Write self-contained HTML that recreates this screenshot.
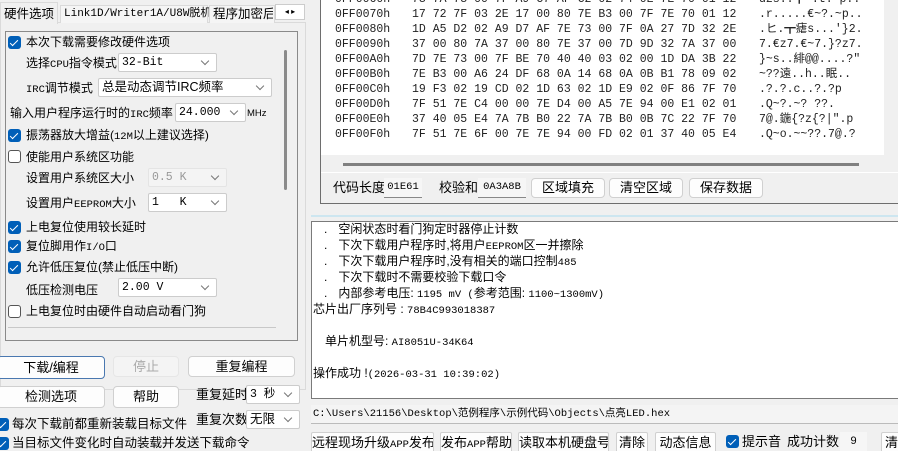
<!DOCTYPE html><html><head><meta charset="utf-8"><style>
*{margin:0;padding:0;box-sizing:border-box}
html,body{width:898px;height:451px;overflow:hidden}
body{background:#f0f0f0;position:relative;font-family:"Liberation Sans","Noto Sans CJK SC",sans-serif;font-size:12px;color:#000}
.a{position:absolute;white-space:nowrap}
.t{line-height:16px;font-size:12px}
.cb{position:absolute;width:13px;height:13px;border-radius:3px;background:#005fb8}
.cb:after{content:"";position:absolute;left:4px;top:1.5px;width:3px;height:7px;border:solid #fff;border-width:0 1.5px 1.5px 0;transform:rotate(45deg)}
.cbo{position:absolute;width:13px;height:13px;border-radius:3px;border:1px solid #555;background:#fff}
.sel{position:absolute;background:#fff;border:1px solid #ccc;border-radius:2px;font-family:"Liberation Mono","Noto Sans CJK SC",monospace;font-size:11.5px;padding-left:3px;line-height:17px;white-space:nowrap}
.sel:after{content:"";position:absolute;right:8px;top:4px;width:5px;height:5px;border:solid #777;border-width:0 1px 1px 0;transform:rotate(45deg)}
.btn{position:absolute;background:#fdfdfd;border:1px solid #d0d0d0;border-radius:4px;text-align:center;font-size:12px;white-space:nowrap;overflow:hidden}
.hx{font-family:"Liberation Mono",monospace;font-size:11.5px;color:#222;line-height:15px}
.box{position:absolute;background:#f6f6f6;border-bottom:1px solid #888;font-family:"Liberation Mono",monospace;font-size:10.5px;text-align:center;line-height:18px}
.m{font-family:"Liberation Mono",monospace;font-size:10.5px}
</style></head><body>
<div class="a" style="left:0;top:22px;width:306px;height:368px;border:1px solid #dadada;background:#f0f0f0"></div>
<div class="a" style="left:0;top:2px;width:58px;height:22px;background:#f0f0f0;border:1px solid #dadada;border-bottom:none;"></div>
<div class="a t" style="left:4px;top:6px;font-size:12.5px">硬件选项</div>
<div class="a" style="left:60px;top:5px;width:148px;height:18px;border:1px solid #dadada;border-bottom:none;background:#f5f5f5"></div>
<div class="a t" style="left:64px;top:6px;font-family:'Liberation Mono','Noto Sans CJK SC',monospace;font-size:11px">Link1D/Writer1A/U8W脱机</div>
<div class="a" style="left:209px;top:5px;width:66px;height:18px;border:1px solid #dadada;border-bottom:none;background:#f5f5f5"></div>
<div class="a t" style="left:213px;top:6px;font-size:12.5px;width:60px;overflow:hidden">程序加密后</div>
<div class="a" style="left:275px;top:4px;width:30px;height:16px;background:#fff;border:1px solid #ccc;font-size:8px;line-height:14px;text-align:center">◂ ▸</div>
<div class="a" style="left:5px;top:31px;width:293px;height:310px;border:1px solid #8a8a8a"></div>
<div class="a" style="left:284px;top:50px;width:3px;height:140px;background:#8a8a8a;border-radius:2px"></div>
<div class="a" style="left:8px;top:327px;width:268px;height:1px;background:#c8c8c8"></div>

<div class="cb" style="left:8px;top:36px"></div><div class="a t" style="left:26px;top:34px">本次下载需要修改硬件选项</div>
<div class="a t" style="left:26px;top:55px">选择<span class="m">CPU</span>指令模式</div><div class="sel" style="left:118px;top:53px;width:99px;height:19px">32-Bit</div>
<div class="a t" style="left:26px;top:80px"><span class="m">IRC</span>调节模式</div><div class="sel" style="left:98px;top:78px;width:174px;height:19px;font-family:'Liberation Sans','Noto Sans CJK SC',sans-serif;font-size:12.5px">总是动态调节IRC频率</div>
<div class="a t" style="left:10px;top:105px">输入用户程序运行时的<span class="m">IRC</span>频率</div><div class="sel" style="left:175px;top:103px;width:71px;height:19px">24.000</div><div class="a t" style="left:247px;top:106px;font-size:9.5px">MHz</div>
<div class="cb" style="left:8px;top:129px"></div><div class="a t" style="left:26px;top:127px">振荡器放大增益(<span class="m">12M</span>以上建议选择)</div>
<div class="cbo" style="left:8px;top:150px"></div><div class="a t" style="left:26px;top:149px">使能用户系统区功能</div>
<div class="a t" style="left:26px;top:170px">设置用户系统区大小</div><div class="sel" style="left:148px;top:168px;width:79px;height:19px;color:#999;background:#f4f4f4;border-color:#e4e4e4">0.5 K</div>
<div class="a t" style="left:26px;top:195px">设置用户<span class="m">EEPROM</span>大小</div><div class="sel" style="left:148px;top:193px;width:79px;height:19px">1&nbsp;&nbsp;&nbsp;K</div>
<div class="cb" style="left:8px;top:221px"></div><div class="a t" style="left:26px;top:219px">上电复位使用较长延时</div>
<div class="cb" style="left:8px;top:240px"></div><div class="a t" style="left:26px;top:238px">复位脚用作<span class="m">I/O</span>口</div>
<div class="cb" style="left:8px;top:261px"></div><div class="a t" style="left:26px;top:259px">允许低压复位(禁止低压中断)</div>
<div class="a t" style="left:26px;top:282px">低压检测电压</div><div class="sel" style="left:118px;top:278px;width:99px;height:19px">2.00 V</div>
<div class="cbo" style="left:8px;top:305px"></div><div class="a t" style="left:26px;top:303px">上电复位时由硬件自动启动看门狗</div>

<div class="btn" style="left:-3px;top:356px;width:108px;height:23px;border-color:#4a78b0;line-height:21px;font-size:13px">下载/编程</div>
<div class="btn" style="left:113px;top:356px;width:66px;height:21px;color:#aaa;background:#f4f4f4;border-color:#e6e6e6;line-height:19px;font-size:13px">停止</div>
<div class="btn" style="left:188px;top:356px;width:107px;height:21px;line-height:19px;font-size:13px">重复编程</div>
<div class="btn" style="left:-3px;top:386px;width:108px;height:22px;line-height:20px;font-size:13px">检测选项</div>
<div class="btn" style="left:113px;top:386px;width:66px;height:22px;line-height:20px;font-size:13px">帮助</div>
<div class="a t" style="left:196px;top:387px;font-size:13px">重复延时</div><div class="sel" style="left:246px;top:385px;width:54px;height:19px;font-family:'Liberation Mono','Noto Sans CJK SC',monospace">3 秒</div>
<div class="a t" style="left:196px;top:412px;font-size:13px">重复次数</div><div class="sel" style="left:246px;top:410px;width:54px;height:19px;font-family:'Liberation Sans','Noto Sans CJK SC',sans-serif;font-size:12.5px">无限</div>
<div class="cb" style="left:-4px;top:418px"></div><div class="a t" style="left:12px;top:416px;font-size:12.5px">每次下载前都重新装载目标文件</div>
<div class="cb" style="left:-4px;top:437px"></div><div class="a t" style="left:12px;top:435px;font-size:12.5px">当目标文件变化时自动装载并发送下载命令</div>

<div class="a" style="left:320px;top:-2px;width:580px;height:206px;border:1px solid #6e6e6e;border-top:none;border-right:none"></div>
<div class="a" style="left:321px;top:0;width:563px;height:155px;background:#fff"></div>
<div class="a" style="left:343px;top:163px;width:516px;height:3px;background:#808080"></div>
<div class="a" style="left:321px;top:172px;width:577px;height:1px;background:#fff"></div>
<div class="a hx" style="left:335px;top:-8px">0FF0060h<br>0FF0070h<br>0FF0080h<br>0FF0090h<br>0FF00A0h<br>0FF00B0h<br>0FF00C0h<br>0FF00D0h<br>0FF00E0h<br>0FF00F0h</div>
<div class="a hx" style="left:412px;top:-8px">73 7A 73 00 7F A9 C7 AF C2 02 74 0E 7E 70 01 12<br>17 72 7F 03 2E 17 00 80 7E B3 00 7F 7E 70 01 12<br>1D A5 D2 02 A9 D7 AF 7E 73 00 7F 0A 27 7D 32 2E<br>37 00 80 7A 37 00 80 7E 37 00 7D 9D 32 7A 37 00<br>7D 7E 73 00 7F BE 70 40 40 03 02 00 1D DA 3B 22<br>7E B3 00 A6 24 DF 68 0A 14 68 0A 0B B1 78 09 02<br>19 F3 02 19 CD 02 1D 63 02 1D E9 02 0F 86 7F 70<br>7F 51 7E C4 00 00 7E D4 00 A5 7E 94 00 E1 02 01<br>37 40 05 E4 7A 7B B0 22 7A 7B B0 0B 7C 22 7F 70<br>7F 51 7E 6F 00 7E 7E 94 00 FD 02 01 37 40 05 E4</div>
<div class="a hx" style="left:759px;top:-8px;font-family:'Liberation Mono','Noto Sans CJK SC',monospace">dzs..┏ .t.~p..<br>.r.....€~?.~p..<br>.ヒ.┳瘧s...'}2.<br>7.€z7.€~7.}?z7.<br>}~s..緋@@....?"<br>~??遠..h..眠..<br>.?.?.c..?.?p<br>.Q~?.~?  ??.<br>7@.鍦{?z{?|".p<br>.Q~o.~~??.7@.?</div>
<div class="a t" style="left:333px;top:180px;font-size:13px">代码长度</div><div class="box" style="left:384px;top:178px;width:38px;height:20px">01E61</div>
<div class="a t" style="left:439px;top:180px;font-size:13px">校验和</div><div class="box" style="left:478px;top:178px;width:48px;height:20px">0A3A8B</div>
<div class="btn" style="left:531px;top:178px;width:74px;height:20px;line-height:18px;font-size:13px">区域填充</div>
<div class="btn" style="left:609px;top:178px;width:74px;height:20px;line-height:18px;font-size:13px">清空区域</div>
<div class="btn" style="left:689px;top:178px;width:74px;height:20px;line-height:18px;font-size:13px">保存数据</div>
<div class="a" style="left:311px;top:215px;width:587px;height:2px;background:#cde6f0"></div>

<div class="a" style="left:311px;top:221px;width:590px;height:178px;background:#fff;border:1px solid #7a7a7a;border-right:none"></div>
<div class="a" style="left:313px;top:221px;font-size:12px;line-height:16px">
<div style="height:16px"><span style="display:inline-block;width:11px;margin-left:11px">.</span> 空闲状态时看门狗定时器停止计数</div>
<div style="height:16px"><span style="display:inline-block;width:11px;margin-left:11px">.</span> 下次下载用户程序时,将用户<span class="m">EEPROM</span>区一并擦除</div>
<div style="height:16px"><span style="display:inline-block;width:11px;margin-left:11px">.</span> 下次下载用户程序时,没有相关的端口控制<span class="m">485</span></div>
<div style="height:16px"><span style="display:inline-block;width:11px;margin-left:11px">.</span> 下次下载时不需要校验下载口令</div>
<div style="height:16px"><span style="display:inline-block;width:11px;margin-left:11px">.</span> 内部参考电压: <span class="m">1195 mV (</span>参考范围: <span class="m">1100~1300mV)</span></div>
<div style="height:16px">芯片出厂序列号 : <span class="m">78B4C993018387</span></div>
<div style="height:16px"></div>
<div style="height:16px;padding-left:12px">单片机型号: <span class="m">AI8051U-34K64</span></div>
<div style="height:16px"></div>
<div style="height:16px">操作成功 !<span class="m">(2026-03-31 10:39:02)</span></div>
</div>
<div class="a" style="left:311px;top:405px;width:587px;height:19px;background:#f4f4f4;border-bottom:1px solid #bbb"></div>
<div class="a" style="left:313px;top:406px;font-family:'Liberation Mono','Noto Sans CJK SC',monospace;font-size:10.5px;line-height:16px">C:\Users\21156\Desktop\范例程序\示例代码\Objects\点亮LED.hex</div>
<div class="btn" style="left:311px;top:432px;width:123px;height:21px;border-radius:2px;line-height:19px;font-size:13px">远程现场升级<span class="m">APP</span>发布</div>
<div class="btn" style="left:440px;top:432px;width:72px;height:21px;border-radius:2px;line-height:19px;font-size:13px">发布<span class="m">APP</span>帮助</div>
<div class="btn" style="left:518px;top:432px;width:91px;height:21px;border-radius:2px;line-height:19px;font-size:13px">读取本机硬盘号</div>
<div class="btn" style="left:616px;top:432px;width:32px;height:21px;border-radius:2px;line-height:19px;font-size:13px">清除</div>
<div class="btn" style="left:655px;top:432px;width:61px;height:21px;border-radius:2px;line-height:19px;font-size:13px">动态信息</div>
<div class="cb" style="left:726px;top:435px"></div><div class="a t" style="left:742px;top:434px;font-size:13px">提示音</div>
<div class="a t" style="left:787px;top:434px;font-size:13px">成功计数</div>
<div class="a" style="left:840px;top:432px;width:27px;height:19px;background:#f6f6f6;font-size:11px;text-align:center;line-height:19px">9</div>
<div class="btn" style="left:881px;top:432px;width:30px;height:21px;border-radius:2px;line-height:19px;text-align:left;padding-left:3px;font-size:13px">清</div>
</body></html>
